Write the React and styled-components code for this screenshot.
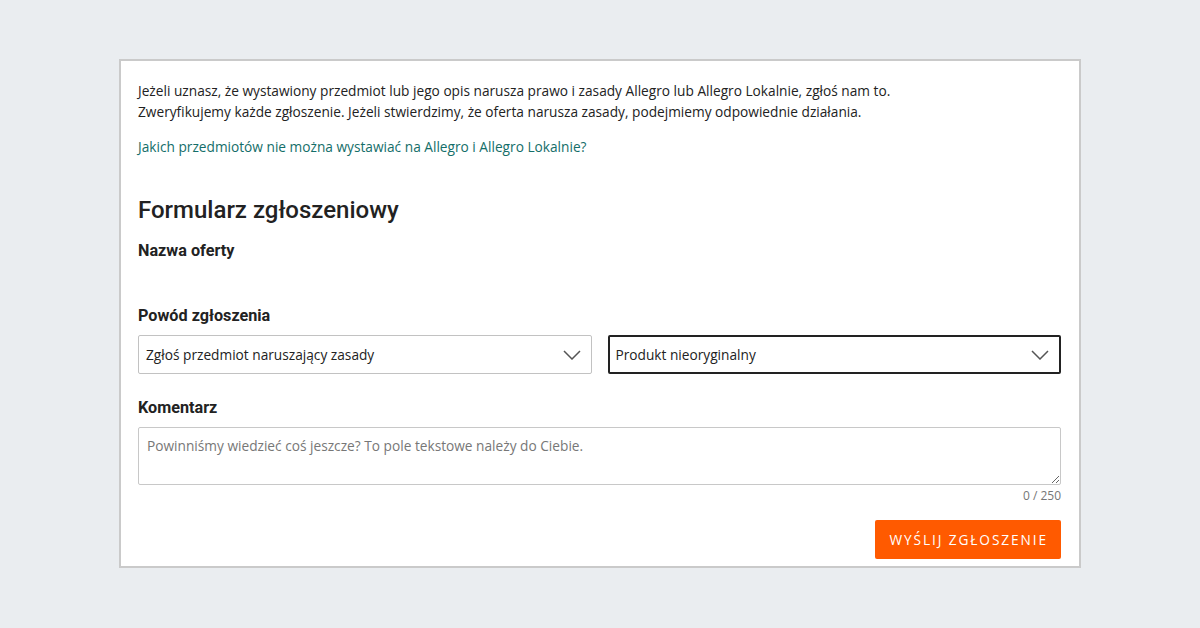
import React, { useState } from 'react'
import styled, { createGlobalStyle } from 'styled-components'

const GlobalStyle = createGlobalStyle`
  html, body {
    margin: 0;
    padding: 0;
    background: #eaedf0;
    font-family: "Open Sans", "Liberation Sans", sans-serif;
    color: #222;
  }
  * { box-sizing: border-box; }
`

const Page = styled.div`
  min-height: 628px;
  padding-top: 59px;
  display: flex;
  align-items: flex-start;
  justify-content: center;
`

const Card = styled.section`
  width: 962px;
  background: #fff;
  border: 2px solid #cacaca;
  padding: 19px 18px 7px 17px;
`

const Intro = styled.p`
  margin: 0;
  font-size: 13.7px;
  line-height: 21px;
`

const HelpLink = styled.a`
  display: block;
  margin-top: 14px;
  font-size: 13.7px;
  line-height: 21px;
  color: #146e69;
  text-decoration: none;
`

const Heading = styled.h2`
  margin: 37px 0 0;
  font-family: Roboto, "Liberation Sans", sans-serif;
  font-weight: 500;
  font-size: 24px;
  line-height: 32px;
  color: #222;
`

const Label = styled.h3`
  margin: ${p => p.$top}px 0 0;
  font-family: Roboto, "Liberation Sans", sans-serif;
  font-weight: 700;
  font-size: 16.2px;
  line-height: 24px;
  color: #222;
`

const SelectRow = styled.div`
  margin-top: 7px;
  display: grid;
  grid-template-columns: 1fr 1fr;
  gap: 16px;
`

const SelectBox = styled.div`
  height: 39px;
  display: flex;
  align-items: center;
  justify-content: space-between;
  padding: 0 10px 0 ${p => (p.$focused ? 6 : 7)}px;
  border: ${p => (p.$focused ? '2px solid #222' : '1px solid #c2c2c2')};
  border-radius: 2px;
  background: #fff;
  font-size: 13.7px;
  color: #222;
  cursor: pointer;
`

const Chevron = styled.svg`
  width: 18px;
  height: 10px;
  flex-shrink: 0;
`

const TextArea = styled.textarea`
  display: block;
  margin-top: 7px;
  width: 100%;
  height: 58px;
  padding: 8px 8px;
  border: 1px solid #c8c8c8;
  border-radius: 2px;
  font-family: "Open Sans", "Liberation Sans", sans-serif;
  font-size: 13.7px;
  line-height: 20px;
  color: #222;
  resize: vertical;
  outline: none;
  &::placeholder { color: #777; }
`

const Counter = styled.div`
  margin-top: 3px;
  text-align: right;
  font-size: 12px;
  line-height: 16px;
  color: #767676;
`

const Actions = styled.div`
  margin-top: 16px;
  display: flex;
  justify-content: flex-end;
`

const SubmitButton = styled.button`
  height: 39px;
  padding: 0 13px 0 14px;
  border: 0;
  border-radius: 2px;
  background: #ff5a00;
  color: #fff;
  font-family: "Open Sans", "Liberation Sans", sans-serif;
  font-size: 13.7px;
  letter-spacing: 1.9px;
  text-transform: uppercase;
  cursor: pointer;
`

function Select({ value, focused }) {
  return (
    <SelectBox $focused={focused}>
      <span>{value}</span>
      <Chevron viewBox="0 0 18 10">
        <path d="M1 1l8 8 8-8" fill="none" stroke="#555" strokeWidth="1.5" />
      </Chevron>
    </SelectBox>
  )
}

export default function App() {
  const [comment, setComment] = useState('')

  return (
    <Page>
      <GlobalStyle />
      <Card>
        <Intro>
          Jeżeli uznasz, że wystawiony przedmiot lub jego opis narusza prawo i zasady Allegro lub Allegro Lokalnie, zgłoś nam to.
          <br />
          Zweryfikujemy każde zgłoszenie. Jeżeli stwierdzimy, że oferta narusza zasady, podejmiemy odpowiednie działania.
        </Intro>
        <HelpLink href="#">Jakich przedmiotów nie można wystawiać na Allegro i Allegro Lokalnie?</HelpLink>

        <Heading>Formularz zgłoszeniowy</Heading>
        <Label $top={13}>Nazwa oferty</Label>

        <Label $top={41}>Powód zgłoszenia</Label>
        <SelectRow>
          <Select value="Zgłoś przedmiot naruszający zasady" />
          <Select value="Produkt nieoryginalny" focused />
        </SelectRow>

        <Label $top={22}>Komentarz</Label>
        <TextArea
          value={comment}
          maxLength={250}
          onChange={e => setComment(e.target.value)}
          placeholder="Powinniśmy wiedzieć coś jeszcze? To pole tekstowe należy do Ciebie."
        />
        <Counter>{comment.length} / 250</Counter>

        <Actions>
          <SubmitButton>Wyślij zgłoszenie</SubmitButton>
        </Actions>
      </Card>
    </Page>
  )
}
